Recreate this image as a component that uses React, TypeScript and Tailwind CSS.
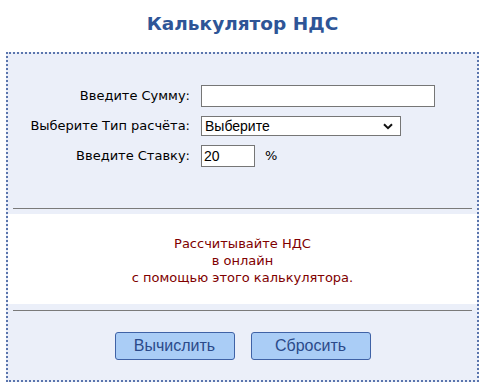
import React from 'react';

export default function App() {
  return (
    <div className="w-[485px] h-[388px] bg-white pt-[10px]">
      {/* Title */}
      <h1 className="text-center text-[#2e5597] text-[18.5px] leading-[28px] font-bold font-['DejaVu_Sans',Verdana,sans-serif]">
        Калькулятор НДС
      </h1>

      {/* Calculator box */}
      <div className="ml-[6px] mt-[14px] w-[473px] h-[330px] border-2 border-dotted border-[#5a75ad] bg-[#ebeff9] font-['DejaVu_Sans',Verdana,sans-serif] text-[13px] text-black">
        {/* Form */}
        <div className="pt-[31px] pb-[41px] grid grid-cols-[182px_1fr] gap-x-[11px] gap-y-[9px] items-center">
          <label className="text-right">Введите Сумму:</label>
          <input
            type="text"
            className="w-[234px] h-[22px] border border-[#767676] bg-white px-[3px] font-['Liberation_Sans',Arial,sans-serif] text-[14px] outline-none"
          />

          <label className="text-right">Выберите Тип расчёта:</label>
          <div className="relative w-[200px] h-[20px] border border-[#767676] bg-white">
            <span className="absolute left-[3px] top-[1px] font-['Liberation_Sans',Arial,sans-serif] text-[14px] leading-[17px]">
              Выберите
            </span>
            <svg className="absolute right-[7px] top-[6px]" width="10" height="7" viewBox="0 0 10 7">
              <path d="M1 1.2 L5 5.2 L9 1.2" stroke="#111" strokeWidth="2" fill="none" />
            </svg>
          </div>

          <label className="text-right">Введите Ставку:</label>
          <div className="flex items-center gap-[10px]">
            <input
              type="text"
              defaultValue="20"
              className="w-[54px] h-[22px] border border-[#767676] bg-white px-[2px] font-['Liberation_Sans',Arial,sans-serif] text-[14px] outline-none"
            />
            <span>%</span>
          </div>
        </div>

        <hr className="mx-[5px] border-0 border-t border-[#7a7a7a]" />

        {/* Info */}
        <div className="mt-[5px] bg-white pt-[21px] pb-[18px] text-center text-[#800000] leading-[17px]">
          Рассчитывайте НДС
          <br />
          в онлайн
          <br />
          с помощью этого калькулятора.
        </div>

        <hr className="mt-[6px] mx-[5px] border-0 border-t border-[#7a7a7a]" />

        {/* Buttons */}
        <div className="pt-[21px] flex justify-center gap-[16px] font-['Liberation_Sans',Arial,sans-serif]">
          <button className="w-[120px] h-[28px] rounded-[3px] border border-[#3f62a6] bg-[#aacdf6] text-[16px] text-[#2b4a8a]">
            Вычислить
          </button>
          <button className="w-[120px] h-[28px] rounded-[3px] border border-[#3f62a6] bg-[#aacdf6] text-[16px] text-[#2b4a8a]">
            Сбросить
          </button>
        </div>
      </div>
    </div>
  );
}
